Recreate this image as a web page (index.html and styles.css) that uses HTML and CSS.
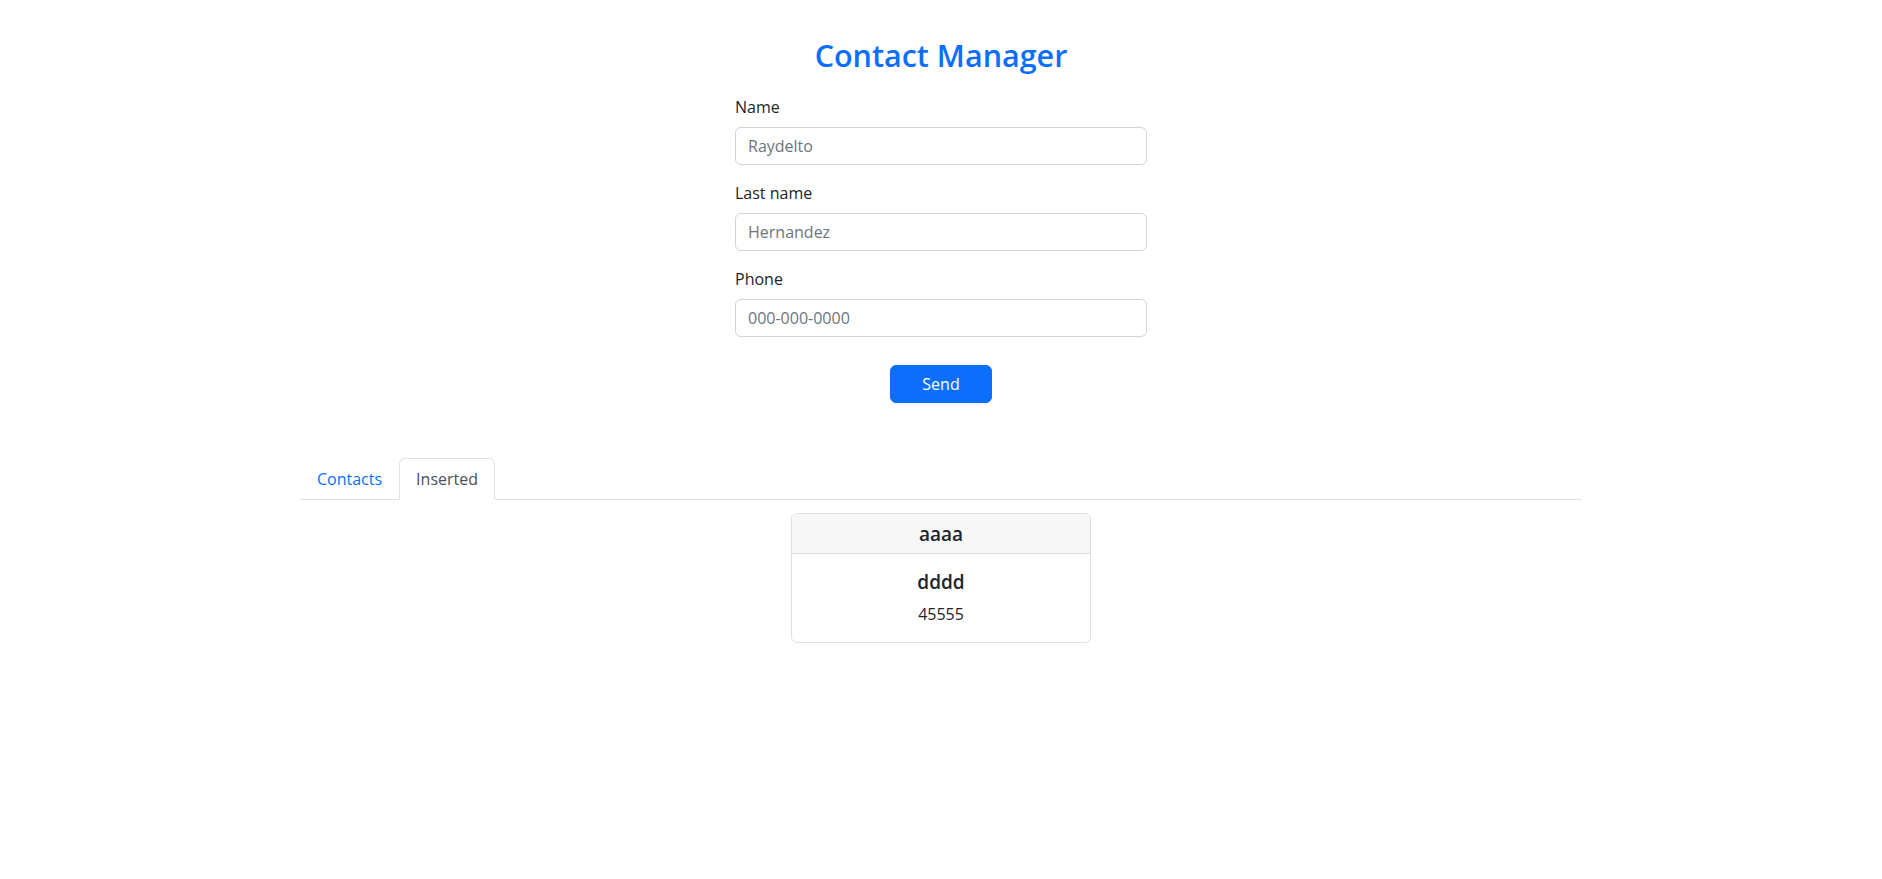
FILE: index.html
```html
<!DOCTYPE html>
<html lang="en">
<head>
<meta charset="utf-8">
<title>Contact Manager</title>
<link rel="stylesheet" href="styles.css">
</head>
<body>
<main class="page">
  <h2 class="title">Contact Manager</h2>
  <form class="form">
    <div class="field">
      <label class="label" for="name">Name</label>
      <input class="input" id="name" type="text" placeholder="Raydelto">
    </div>
    <div class="field">
      <label class="label" for="last">Last name</label>
      <input class="input" id="last" type="text" placeholder="Hernandez">
    </div>
    <div class="field">
      <label class="label" for="phone">Phone</label>
      <input class="input" id="phone" type="text" placeholder="000-000-0000">
    </div>
    <div class="actions">
      <button class="btn" type="button">Send</button>
    </div>
  </form>
  <section class="tabs-wrap">
    <ul class="tabs">
      <li class="tab"><a class="tab-link">Contacts</a></li>
      <li class="tab"><a class="tab-link active">Inserted</a></li>
    </ul>
    <div class="cards">
      <div class="card">
        <div class="card-header"><h5 class="card-head-title">aaaa</h5></div>
        <div class="card-body">
          <h5 class="card-title">dddd</h5>
          <p class="card-text">45555</p>
        </div>
      </div>
    </div>
  </section>
</main>
</body>
</html>
```
FILE: styles.css
```css
* { box-sizing: border-box; }
html, body { margin: 0; background: #fff; }
body {
  font-family: "Segoe UI", "Open Sans", "Liberation Sans", sans-serif;
  font-size: 16px;
  line-height: 1.5;
  color: #212529;
}
.page {
  padding-top: 36px;
  display: flex;
  flex-direction: column;
  align-items: center;
}
.title {
  margin: 0 0 21px;
  font-size: 30.5px;
  font-weight: 600;
  line-height: 38px;
  color: #0d6efd;
  text-align: center;
}
.form {
  width: 412px;
  display: flex;
  flex-direction: column;
}
.field {
  display: flex;
  flex-direction: column;
  margin-bottom: 16px;
}
.label {
  margin-bottom: 8px;
  line-height: 24px;
}
.input {
  height: 38px;
  padding: 6px 12px;
  font: inherit;
  color: #212529;
  border: 1px solid #ced4da;
  border-radius: 6px;
  background: #fff;
  outline: none;
}
.input::placeholder { color: #6c757d; opacity: 1; }
.actions {
  display: flex;
  justify-content: center;
  padding-top: 12px;
}
.btn {
  width: 102px;
  height: 38px;
  font: inherit;
  color: #fff;
  background: #0d6efd;
  border: 1px solid #0d6efd;
  border-radius: 6px;
}
.tabs-wrap {
  width: 1282px;
  margin-top: 55px;
}
.tabs {
  list-style: none;
  margin: 0;
  padding: 0;
  display: flex;
  border-bottom: 1px solid #dee2e6;
}
.tab { margin-bottom: -1px; }
.tab-link {
  display: block;
  padding: 8px 16px;
  line-height: 24px;
  color: #0d6efd;
  border: 1px solid transparent;
  border-top-left-radius: 6px;
  border-top-right-radius: 6px;
  cursor: pointer;
}
.tab-link.active {
  color: #495057;
  background: #fff;
  border-color: #dee2e6 #dee2e6 #fff;
}
.cards {
  display: flex;
  justify-content: center;
  padding-top: 13px;
}
.card {
  width: 300px;
  border: 1px solid rgba(0,0,0,0.125);
  border-radius: 6px;
  text-align: center;
  overflow: hidden;
}
.card-header {
  padding: 8px 16px 7px;
  background: #f7f7f7;
  border-bottom: 1px solid rgba(0,0,0,0.125);
}
.card-head-title, .card-title {
  margin: 0;
  font-size: 19px;
  font-weight: 600;
  line-height: 24px;
}
.card-body { padding: 16px; }
.card-title { margin-bottom: 8px; }
.card-text { margin: 0; }
```
